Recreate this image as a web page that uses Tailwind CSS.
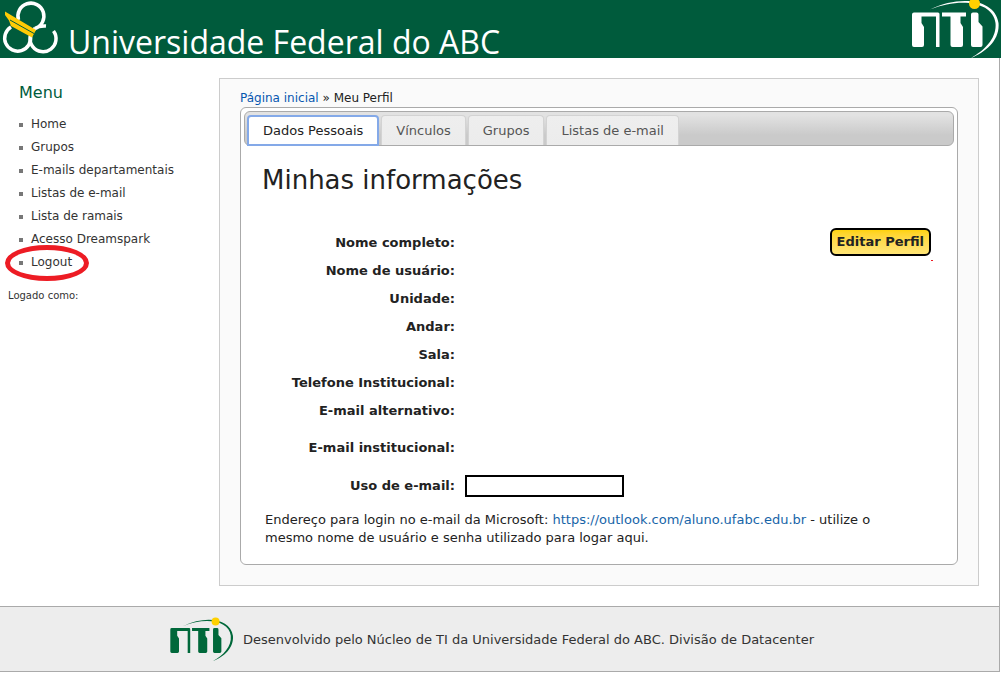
<!DOCTYPE html>
<html lang="pt-BR">
<head>
<meta charset="utf-8">
<meta name="viewport" content="width=device-width, initial-scale=1">
<title>Meu Perfil - Universidade Federal do ABC</title>
<script src="https://cdn.jsdelivr.net/npm/@tailwindcss/browser@4"></script>
</head>
<body class="bg-white font-['DejaVu_Sans',Verdana,sans-serif] text-xs text-[#222]">
<svg class="hidden" aria-hidden="true">
  <symbol id="nti" viewBox="0 0 96 58" overflow="visible">
    <path d="M7 14.5Q7 12.500 9 12.500H33Q34.500 12.500 34.500 14V47H31V16.500H16.500V23L19 27V45Q19 47 17 47H9Q7 47 7 45Z"/>
    <path d="M37 12.500H61V16.500H55.500V23L58 27V45Q58 47 56 47H47.500Q45.500 47 45.500 45V16.500H37Z"/>
    <path d="M66 14.500Q66 12.500 68 12.500H71.500Q73.500 12.500 73.500 14.500V22L77.500 26.500V45Q77.500 47 75.500 47H68Q66 47 66 45Z"/>
    <path d="M25 9.500C55-5 90-1 93.500 23C95 40 81 52 66 58C80 50 92 38 90.500 23C88 2 56-3 25 9.500Z"/>
    <circle cx="69.500" cy="3.500" r="5.500" fill="#ffd100"/>
  </symbol>
</svg>
<div class="border-r border-b border-[#aaa] mr-px">
  <header class="flex h-[58px] items-end justify-between bg-[#005b3c] text-white -mr-0.5">
    <a href="#" class="flex items-end" aria-label="Universidade Federal do ABC">
      <svg class="h-[58px] w-[68px]" viewBox="0 0 68 58" fill="none">
        <g stroke="#fff" stroke-width="3.5">
          <path d="M18.500 20A13 13 0 1 1 35 28.500Q39 25.500 46 26"/>
          <path d="M11 27A13 13 0 1 0 30.500 36"/>
          <path d="M35 28.500A13 13 0 1 0 53.500 31"/>
        </g>
        <path d="M5 11.500L36 30L32 37.500L11 26L9 20.500L5 15Z" fill="#ffcb05"/>
        <path d="M10 20L34 33.500" stroke="#005b3c" stroke-width="1"/>
      </svg>
      <span class="whitespace-nowrap font-['Open_Sans',sans-serif] text-[32px] leading-8">Universidade Federal do ABC</span>
    </a>
    <a href="#" aria-label="NTI"><svg class="h-[58px] w-24" viewBox="0 0 96 58"><use href="#nti" width="96" height="58" fill="#fff"/></svg></a>
  </header>

  <div class="flex">
    <nav class="w-[219px] shrink-0 pt-[25px] pl-2" aria-label="Menu">
      <h2 class="pl-[11px] text-base leading-5 text-[#005b3c]">Menu</h2>
      <ul class="mt-2.5 pl-[11px] leading-[23px] text-[#333]">
        <li class="flex items-center gap-2"><span class="size-1 bg-[#777]"></span><a href="#">Home</a></li>
        <li class="flex items-center gap-2"><span class="size-1 bg-[#777]"></span><a href="#">Grupos</a></li>
        <li class="flex items-center gap-2"><span class="size-1 bg-[#777]"></span><a href="#">E-mails departamentais</a></li>
        <li class="flex items-center gap-2"><span class="size-1 bg-[#777]"></span><a href="#">Listas de e-mail</a></li>
        <li class="flex items-center gap-2"><span class="size-1 bg-[#777]"></span><a href="#">Lista de ramais</a></li>
        <li class="flex items-center gap-2"><span class="size-1 bg-[#777]"></span><a href="#">Acesso Dreamspark</a></li>
        <li class="relative flex items-center gap-2"><span class="size-1 bg-[#777]"></span><a href="#">Logout</a>
          <span class="absolute -left-3.5 -top-1.5 h-9 w-[84px] rounded-[50%] border-[5px] border-[#ed1c24]"></span></li>
      </ul>
      <p class="mt-3.5 text-[10px] leading-4 text-[#333]">Logado como:</p>
    </nav>

    <main class="mt-5 mr-5 mb-5 min-w-0 flex-1 border border-[#ccc] bg-[#fafafa] px-5 pt-[11px] pb-5">
      <p class="pb-px leading-4"><a href="#" class="text-[#0657b0]">Página inicial</a> » Meu Perfil</p>
      <div class="rounded-md border border-[#aaa] bg-white p-[3px] text-[13px]">
        <div role="tablist" class="flex h-[35px] items-stretch gap-0.5 rounded-md border border-[#aaa] bg-linear-to-b from-[#e2e2e2] from-10% to-[#cacaca] to-70% pt-[3px] pl-0.5 text-[#555]">
          <button role="tab" aria-selected="true" class="-mb-px rounded-t border-2 border-[#84a9e8] bg-white px-3.5 text-[#222]">Dados Pessoais</button>
          <button role="tab" class="rounded-t border border-b-0 border-[#d3d3d3] bg-linear-to-b from-[#eee] to-[#ececec] px-3.5">Vínculos</button>
          <button role="tab" class="rounded-t border border-b-0 border-[#d3d3d3] bg-linear-to-b from-[#eee] to-[#ececec] px-3.5">Grupos</button>
          <button role="tab" class="rounded-t border border-b-0 border-[#d3d3d3] bg-linear-to-b from-[#eee] to-[#ececec] px-3.5">Listas de e-mail</button>
        </div>
        <section class="px-[18px] pt-4 pb-3.5">
          <h1 class="text-[26px] leading-9">Minhas informações</h1>
          <div class="relative mt-[30px] flex items-start justify-between pr-[5px]">
            <div class="pt-px text-right font-bold leading-7">
              <dl class="w-[193px]">
                <dt>Nome completo:</dt><dt>Nome de usuário:</dt><dt>Unidade:</dt><dt>Andar:</dt><dt>Sala:</dt><dt>Telefone Institucional:</dt><dt>E-mail alternativo:</dt>
                <dt class="mt-[9px]">E-mail institucional:</dt>
              </dl>
              <div class="mt-2.5 flex items-center gap-2.5">
                <label for="uso" class="w-[193px]">Uso de e-mail:</label>
                <input id="uso" type="text" class="h-[22px] w-[159px] border-2 border-black bg-white px-1 font-normal">
              </div>
            </div>
            <button class="h-7 rounded-md border-2 border-black bg-linear-to-b from-[#ffd20a] to-[#ffe575] px-[5px] font-bold whitespace-nowrap">Editar Perfil</button>
            <span class="absolute right-[3px] top-8 h-px w-0.5 bg-[#ed1c24]"></span>
          </div>
          <p class="mt-[11px] pl-[3px] pr-10 leading-[18px]">Endereço para login no e-mail da Microsoft: <a href="#" class="text-[#1765a8]">https://outlook.com/aluno.ufabc.edu.br</a> - utilize o mesmo nome de usuário e senha utilizado para logar aqui.</p>
        </section>
      </div>
    </main>
  </div>

  <footer class="flex h-[65px] items-center justify-center gap-2 border-t border-[#aaa] bg-[#ededed] pt-0.5 pr-5 text-[13px] text-[#333]">
    <svg class="h-[42px] w-[70px] overflow-visible" viewBox="0 0 96 58"><use href="#nti" width="96" height="58" fill="#00683a"/></svg>
    <p>Desenvolvido pelo Núcleo de TI da Universidade Federal do ABC. Divisão de Datacenter</p>
  </footer>
</div>
</body>
</html>
